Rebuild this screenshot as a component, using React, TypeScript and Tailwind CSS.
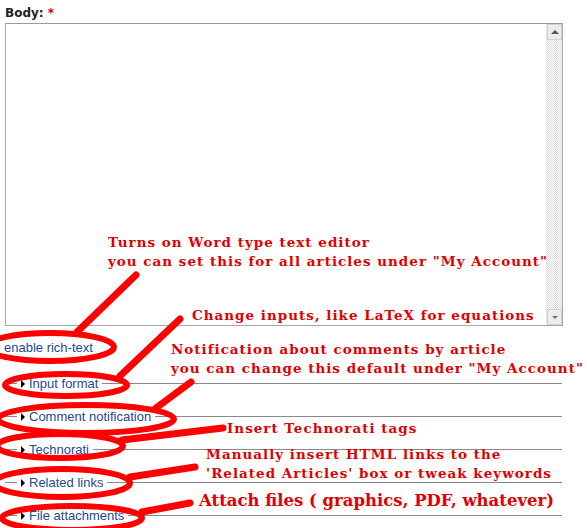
import React from 'react';

const sans = { fontFamily: '"Liberation Sans", Arial, sans-serif' };

const Legend: React.FC<{ label: string }> = ({ label }) => (
  <div className="flex items-center h-[33px] ml-[5px] w-[557px]">
    <div className="w-[12px] h-px bg-[#8a8a8a]" />
    <div className="flex items-center px-[4px] gap-[4px]">
      <span className="w-0 h-0 border-y-[4px] border-y-transparent border-l-[4px] border-l-black" />
      <span className="text-[13px] leading-[15px] text-[#27488c]">{label}</span>
    </div>
    <div className="flex-1 h-px bg-[#8a8a8a]" />
  </div>
);

const Note: React.FC<{ x: number; y: number; lines: string[]; big?: boolean }> = ({ x, y, lines, big }) => (
  <div
    className={
      big
        ? 'absolute text-[16.5px] leading-[19px] font-bold text-[#e00000] whitespace-pre'
        : 'absolute text-[13.5px] leading-[19px] font-bold text-[#e00000] tracking-[1px] whitespace-pre'
    }
    style={{ left: x, top: y, fontFamily: '"DejaVu Serif", "Liberation Serif", serif' }}
  >
    {lines.map((l) => (
      <div key={l}>{l}</div>
    ))}
  </div>
);

const App: React.FC = () => {
  return (
    <div className="relative w-[587px] h-[528px] overflow-hidden bg-white" style={sans}>
      {/* form */}
      <div className="h-[23px] pl-[5px] pt-[6px] text-[12px] leading-[14px] font-bold text-[#222]" style={{ fontFamily: '"DejaVu Sans", Verdana, sans-serif' }}>
        Body: <span className="text-[#cc0000]">*</span>
      </div>

      <div className="ml-[5px] w-[558px] h-[303px] border border-[#a8a8a8] border-t-[#9a9a9a] flex justify-end bg-white">
        <div className="w-[16px] flex flex-col border-l border-[#e4e4e4]">
          <div className="h-[16px] bg-[#ececec] border border-[#d0d0d0] flex items-center justify-center">
            <span className="w-0 h-0 border-x-[4px] border-x-transparent border-b-[4px] border-b-[#555]" />
          </div>
          <div className="flex-1 bg-[repeating-conic-gradient(#dcdcdc_0_25%,#ffffff_0_50%)] bg-[length:2px_2px]" />
          <div className="h-[16px] bg-[#ececec] border border-[#d0d0d0] flex items-center justify-center">
            <span className="w-0 h-0 border-x-[3px] border-x-transparent border-t-[3px] border-t-[#777]" />
          </div>
        </div>
      </div>

      <div className="h-[41px] pt-[14px] pl-[4px] text-[13px] leading-[15px] text-[#27488c]">enable rich-text</div>

      <Legend label="Input format" />
      <Legend label="Comment notification" />
      <Legend label="Technorati" />
      <Legend label="Related links" />
      <Legend label="File attachments" />

      {/* annotations */}
      <svg className="absolute inset-0 pointer-events-none" width="587" height="528" viewBox="0 0 587 528">
        <g fill="none" stroke="#ff0000" strokeWidth="6" strokeLinecap="round">
          <ellipse cx="50" cy="347" rx="64" ry="14" />
          <line x1="77" y1="332" x2="136" y2="275" strokeWidth="7" />
          <ellipse cx="66" cy="385" rx="61" ry="11" />
          <line x1="120" y1="376" x2="180" y2="319" strokeWidth="7" />
          <ellipse cx="86" cy="419" rx="88" ry="14" />
          <line x1="156" y1="408" x2="191" y2="382" strokeWidth="7" />
          <ellipse cx="60" cy="446" rx="63" ry="12" />
          <line x1="122" y1="440" x2="223" y2="428" strokeWidth="7" />
          <ellipse cx="62" cy="483" rx="68" ry="14" />
          <line x1="130" y1="477" x2="195" y2="467" strokeWidth="7" />
          <ellipse cx="72" cy="518" rx="70" ry="12" />
          <line x1="142" y1="512" x2="190" y2="503" strokeWidth="7" />
        </g>
      </svg>

      <Note x={108} y={233} lines={['Turns on Word type text editor', 'you can set this for all articles under "My Account"']} />
      <Note x={192} y={306} lines={['Change inputs, like LaTeX for equations']} />
      <Note x={171} y={340} lines={['Notification about comments by article', 'you can change this default under "My Account"']} />
      <Note x={227} y={419} lines={['Insert Technorati tags']} />
      <Note x={206} y={445} lines={['Manually insert HTML links to the', "'Related Articles' box or tweak keywords"]} />
      <Note x={199} y={491} big lines={['Attach files ( graphics, PDF, whatever)']} />
    </div>
  );
};

export default App;
